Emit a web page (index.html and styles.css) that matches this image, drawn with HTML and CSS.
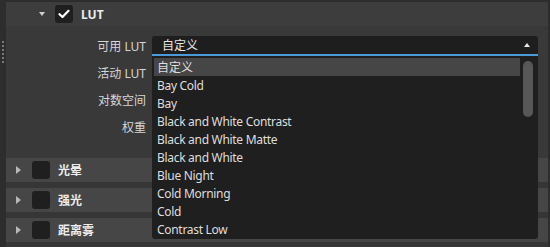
FILE: index.html
```html
<!DOCTYPE html>
<html>
<head>
  <meta charset="UTF-8">
  <title>LUT</title>
  <link rel="stylesheet" href="styles.css">
</head>
<body>
  <div class="app">
    <div class="grip">
      <span></span><span></span><span></span><span></span><span></span><span></span>
    </div>
    <div class="panel">
      <section class="group">
        <div class="group-head nested">
          <span class="caret-down"></span>
          <span class="check on">
            <svg width="12" height="10" viewBox="0 0 12 10"><polyline points="1.5,5.2 4.5,8 10.5,1.8" fill="none" stroke="#fff" stroke-width="2.2" stroke-linecap="round" stroke-linejoin="round"/></svg>
          </span>
          <span class="head-label">LUT</span>
        </div>
        <div class="group-body">
          <div class="prop">
            <label>可用 LUT</label>
            <div class="combo">
              <span>自定义</span>
              <span class="combo-arrow"></span>
              <div class="popup">
                <ul class="options">
                  <li class="current">自定义</li>
                  <li>Bay Cold</li>
                  <li>Bay</li>
                  <li>Black and White Contrast</li>
                  <li>Black and White Matte</li>
                  <li>Black and White</li>
                  <li>Blue Night</li>
                  <li>Cold Morning</li>
                  <li>Cold</li>
                  <li>Contrast Low</li>
                </ul>
                <div class="scroll"><div class="thumb"></div></div>
              </div>
            </div>
          </div>
          <div class="prop"><label>活动 LUT</label><div class="field"></div></div>
          <div class="prop"><label>对数空间</label><div class="field"></div></div>
          <div class="prop"><label>权重</label><div class="field"></div></div>
        </div>
      </section>
      <div class="group-head closed">
        <span class="caret-right"></span>
        <span class="check"></span>
        <span class="head-label">光晕</span>
      </div>
      <div class="group-head closed">
        <span class="caret-right"></span>
        <span class="check"></span>
        <span class="head-label">强光</span>
      </div>
      <div class="group-head closed">
        <span class="caret-right"></span>
        <span class="check"></span>
        <span class="head-label">距离雾</span>
      </div>
    </div>
    <div class="edge"></div>
  </div>
</body>
</html>
```

FILE: styles.css
```css
body {
  margin: 0;
  background: #2d2d2d;
  font-family: "Noto Sans", "Noto Sans CJK SC", sans-serif;
  font-size: 12px;
  color: #dcdcdc;
  overflow: hidden;
}
.app {
  display: flex;
  height: 247px;
  padding-top: 2px;
  box-sizing: border-box;
}
.grip {
  width: 6px;
  display: flex;
  flex-direction: column;
  align-items: flex-start;
  gap: 2px;
  padding: 39px 0 0 2px;
  box-sizing: border-box;
}
.grip span {
  width: 2px;
  height: 2px;
  background: #7a7a7a;
}
.panel {
  width: 542px;
  background: #363636;
  display: flex;
  flex-direction: column;
}
.edge {
  flex: 1;
}
.group-head {
  height: 24px;
  flex-shrink: 0;
  display: flex;
  align-items: center;
  background: #464646;
}
.group-head.nested {
  background: #3d3d3d;
  padding-left: 33px;
}
.group-head.closed {
  padding-left: 10px;
  margin-top: 6px;
}
.group + .group-head.closed {
  margin-top: 0;
}
.caret-down {
  width: 0;
  height: 0;
  border-left: 3.5px solid transparent;
  border-right: 3.5px solid transparent;
  border-top: 4px solid #cfcfcf;
  margin-right: 10px;
}
.caret-right {
  width: 0;
  height: 0;
  border-top: 4px solid transparent;
  border-bottom: 4px solid transparent;
  border-left: 5px solid #b8b8b8;
  margin-right: 11px;
}
.check {
  width: 18px;
  height: 18px;
  border-radius: 3px;
  background: #1f1f1f;
  margin-right: 8px;
  display: flex;
  align-items: center;
  justify-content: center;
}
.head-label {
  font-weight: bold;
  color: #ececec;
}
.group-body {
  background: #393939;
  padding: 10px 0 21px;
  display: flex;
  flex-direction: column;
  gap: 7px;
}
.prop {
  display: grid;
  grid-template-columns: 140px 386px;
  column-gap: 6px;
  align-items: center;
  height: 20px;
}
.prop label {
  text-align: right;
  color: #d6d6d6;
}
.field {
  height: 20px;
}
.combo {
  position: relative;
  height: 18px;
  background: #1e1e1e;
  border-bottom: 2px solid #4a9ad6;
  border-radius: 3px 3px 0 0;
  display: flex;
  align-items: center;
  justify-content: space-between;
  padding: 0 8px 0 10px;
  color: #e6e6e6;
}
.combo-arrow {
  width: 0;
  height: 0;
  border-left: 3.5px solid transparent;
  border-right: 3.5px solid transparent;
  border-bottom: 4px solid #e8e8e8;
}
.popup {
  position: absolute;
  left: 0;
  top: 20px;
  width: 386px;
  height: 183px;
  background: #1f1f1f;
  border-radius: 0 0 3px 3px;
  display: flex;
  padding: 2px 5px 0 2px;
  box-sizing: border-box;
  z-index: 2;
}
.options {
  list-style: none;
  margin: 0;
  padding: 0;
  width: 366px;
}
.options li {
  height: 18px;
  line-height: 19px;
  padding-left: 3px;
  color: #dedede;
  white-space: nowrap;
  letter-spacing: -0.3px;
}
.options li.current {
  background: #464646;
  letter-spacing: 0;
}
.scroll {
  flex: 1;
  padding: 3px 0 0 3px;
}
.thumb {
  width: 10px;
  height: 56px;
  border-radius: 5px;
  background: #575757;
}
```
